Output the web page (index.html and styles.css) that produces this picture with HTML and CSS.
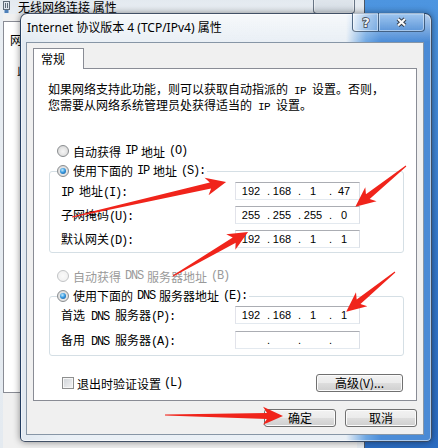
FILE: index.html
```html
<!DOCTYPE html>
<html lang="zh-CN">

<head>
    <meta charset="UTF-8">
    <meta name="viewport" content="width=device-width, initial-scale=1.0">
    <title>Internet 协议版本 4 (TCP/IPv4) 属性</title>
    <link rel="stylesheet" href="styles.css">
</head>

<body>
    <div class="desktop">
        <!-- parent window, mostly hidden behind the dialog -->
        <div class="window back">
            <div class="caption">
                <svg class="app-icon" width="7" height="12" viewBox="0 0 7 12">
                    <rect x="0.5" y="0.5" width="6" height="8" fill="#dfe6ee" stroke="#5f6b78"/>
                    <rect x="2" y="2" width="1" height="5" fill="#5f6b78"/>
                    <rect x="4" y="2" width="1" height="5" fill="#5f6b78"/>
                    <rect x="1.5" y="9" width="4" height="3" fill="#4d7fb8"/>
                </svg>
                <span class="caption-text">无线网络连接 属性</span>
                <div class="caption-buttons">
                    <span class="cap-btn close">
                        <svg width="12" height="10" viewBox="0 0 12 10">
                            <path d="M2.5 -1 L9.5 6.5 M9.5 -1 L2.5 6.5" stroke="#3a4350" stroke-width="4"/>
                            <path d="M2.5 -1 L9.5 6.5 M9.5 -1 L2.5 6.5" stroke="#fafafa" stroke-width="2"/>
                        </svg>
                    </span>
                </div>
            </div>
            <div class="back-client">
                <div class="back-panel">
                    <div>网络连接</div>
                    <div class="back-line">此连接使用下列项目</div>
                </div>
            </div>
        </div>

        <!-- TCP/IPv4 properties dialog -->
        <div class="window dialog">
            <div class="caption">
                <span class="caption-text">Internet 协议版本 4 (TCP/IPv4) 属性</span>
                <div class="caption-buttons">
                    <span class="cap-btn help">
                        <svg width="12" height="14" viewBox="0 0 12 14">
                            <text x="6" y="12" text-anchor="middle">?</text>
                        </svg>
                    </span>
                    <span class="cap-btn close">
                        <svg width="13" height="11" viewBox="0 0 13 11">
                            <path d="M3 2 L10 8.5 M10 2 L3 8.5" stroke="#343d4a" stroke-width="4.2"/>
                            <path d="M3 2 L10 8.5 M10 2 L3 8.5" stroke="#fafafa" stroke-width="2.2"/>
                        </svg>
                    </span>
                </div>
            </div>

            <div class="client">
                <div class="tabs">
                    <div class="tab">常规</div>
                </div>
                <div class="tab-panel">
                    <p class="intro">如果网络支持此功能，则可以获取自动指派的<span class="lat"> IP </span>设置。否则，<br>您需要从网络系统管理员处获得适当的<span class="lat"> IP </span>设置。</p>

                    <label class="option"><span class="radio"></span>自动获得<span class="lat"> IP </span>地址<span class="lat">(O)</span></label>
                    <fieldset class="group group-ip">
                        <legend><label class="option"><span class="radio checked"></span>使用下面的<span class="lat"> IP </span>地址<span class="lat">(S):</span></label></legend>
                        <div class="field-row">
                            <span><span class="lat">IP </span>地址<span class="lat">(I):</span></span>
                            <div class="ip"><span class="oct">192</span><span class="dot">.</span><span class="oct">168</span><span class="dot">.</span><span class="oct">1</span><span class="dot">.</span><span class="oct">47</span></div>
                        </div>
                        <div class="field-row">
                            <span>子网掩码<span class="lat">(U):</span></span>
                            <div class="ip"><span class="oct">255</span><span class="dot">.</span><span class="oct">255</span><span class="dot">.</span><span class="oct">255</span><span class="dot">.</span><span class="oct">0</span></div>
                        </div>
                        <div class="field-row">
                            <span>默认网关<span class="lat">(D):</span></span>
                            <div class="ip"><span class="oct">192</span><span class="dot">.</span><span class="oct">168</span><span class="dot">.</span><span class="oct">1</span><span class="dot">.</span><span class="oct">1</span></div>
                        </div>
                    </fieldset>

                    <label class="option option-dns disabled"><span class="radio"></span>自动获得<span class="lat"> DNS </span>服务器地址<span class="lat">(B)</span></label>
                    <fieldset class="group group-dns">
                        <legend><label class="option"><span class="radio checked"></span>使用下面的<span class="lat"> DNS </span>服务器地址<span class="lat">(E):</span></label></legend>
                        <div class="field-row">
                            <span>首选<span class="lat"> DNS </span>服务器<span class="lat">(P):</span></span>
                            <div class="ip"><span class="oct">192</span><span class="dot">.</span><span class="oct">168</span><span class="dot">.</span><span class="oct">1</span><span class="dot">.</span><span class="oct">1</span></div>
                        </div>
                        <div class="field-row">
                            <span>备用<span class="lat"> DNS </span>服务器<span class="lat">(A):</span></span>
                            <div class="ip"><span class="oct"></span><span class="dot">.</span><span class="oct"></span><span class="dot">.</span><span class="oct"></span><span class="dot">.</span><span class="oct"></span></div>
                        </div>
                    </fieldset>

                    <div class="check-row">
                        <label class="check"><span class="checkbox"></span>退出时验证设置<span class="lat">(L)</span></label>
                        <button class="btn btn-advanced">高级(V)...</button>
                    </div>
                </div>

                <div class="dialog-buttons">
                    <button class="btn">确定</button>
                    <button class="btn">取消</button>
                </div>
            </div>
        </div>

        <!-- red pointer arrows drawn on top -->
        <svg class="marks" width="438" height="448" viewBox="0 0 438 448">
            <g fill="#f0241b">
                <path transform="translate(72 217) rotate(-12.8)" d="M0 -0.5 L142 -3 L138 -9 L158 0 L138 9 L142 3 L0 0.5 Z"/>
                <path transform="translate(406 166) rotate(141.2)" d="M0 -0.5 L49 -3 L45 -9 L65 0 L45 9 L49 3 L0 0.5 Z"/>
                <path transform="translate(173 276) rotate(-30.4)" d="M0 -0.5 L71 -3 L67 -9 L87 0 L67 9 L71 3 L0 0.5 Z"/>
                <path transform="translate(395 272) rotate(140.8)" d="M0 -0.5 L47 -3 L43 -9 L63 0 L43 9 L47 3 L0 0.5 Z"/>
                <path transform="translate(165 415) rotate(0.5)" d="M0 -0.5 L102 -3 L98 -9 L118 0 L98 9 L102 3 L0 0.5 Z"/>
            </g>
        </svg>
    </div>
</body>

</html>
```

FILE: styles.css
```css
* {
    box-sizing: border-box;
}

html,
body {
    margin: 0;
}

body {
    width: 438px;
    height: 448px;
    overflow: hidden;
    font-family: "Noto Sans CJK SC", sans-serif;
    font-size: 12px;
    color: #000;
    background: linear-gradient(180deg, #4d95e0 0, #3478cc 60%, #2b6cc2 100%);
}

.desktop {
    position: relative;
    width: 438px;
    height: 448px;
}

/* latin runs inside chinese labels, half width like the system font */
.lat {
    font-family: "Liberation Mono", monospace;
    font-size: 12px;
    letter-spacing: -1.2px;
}

.window {
    position: absolute;
    display: flex;
    flex-direction: column;
}

.caption {
    display: flex;
    flex-shrink: 0;
}

.caption-buttons {
    display: flex;
    margin-left: auto;
}

.cap-btn {
    display: flex;
    align-items: center;
    justify-content: center;
    border: 1px solid rgba(28, 44, 66, 0.6);
    border-top: 0;
    box-shadow: inset 0 0 0 1px rgba(255, 255, 255, 0.45);
}

/* ---- parent window ---- */

.back {
    left: -5px;
    top: -10px;
    width: 370px;
    height: 470px;
    padding: 0 7px 7px 7px;
    border: 1px solid #4d5866;
    border-radius: 6px;
    background: linear-gradient(180deg, #dfe6ed 0, #e9eef3 22px, #e4eaf0 100%);
}

.back .caption {
    height: 23px;
    align-items: flex-end;
}

.back .app-icon {
    display: block;
    margin-bottom: 1px;
}

.back .caption-text {
    margin-left: 8px;
    line-height: 14px;
    font-size: 12px;
}

.back .caption-buttons {
    margin-right: 2px;
}

.back .cap-btn.close {
    width: 42px;
    height: 23px;
    border-radius: 0 0 4px 4px;
    align-items: flex-start;
    padding-top: 1px;
    background: linear-gradient(180deg, #e6ebf0 0, #d4dce4 100%);
}

.back-client {
    flex: 1;
    background: #f0f0f0;
    padding-top: 7px;
}

.back-panel {
    height: 372px;
    padding: 11px 6px;
    line-height: 14px;
    background: #fff;
    border: 1px solid #898c95;
}

.back-line {
    margin-top: 16px;
    padding-left: 7px;
}

/* ---- properties dialog ---- */

.dialog {
    left: 20px;
    top: 13px;
    width: 412px;
    height: 429px;
    padding: 0 7px 6px 5px;
    border: 1px solid rgba(22, 40, 66, 0.8);
    border-radius: 7px 7px 5px 5px;
    background:
        linear-gradient(180deg, rgba(255, 255, 255, 0.6) 0, rgba(255, 255, 255, 0) 28px),
        linear-gradient(90deg, #e1e9f1 0, #eaf0f6 40px, #e9eff5 325px, #6ea7e3 345px, #4c8dd8 360px, #4a8ad5 100%);
    box-shadow: inset 0 0 0 1px rgba(255, 255, 255, 0.55), 0 0 7px rgba(0, 0, 0, 0.45);
}

.dialog .caption {
    height: 28px;
    align-items: flex-start;
}

.dialog .caption-text {
    margin: 7px 0 0 1px;
    line-height: 14px;
    font-family: "Noto Sans", "Noto Sans CJK SC", sans-serif;
    font-size: 12px;
    color: #000;
}

.dialog .caption-buttons {
    margin-top: -1px;
    margin-right: -1px;
}

.dialog .cap-btn {
    height: 19px;
}

.cap-btn.help {
    width: 26px;
    border-right: 0;
    border-radius: 0 0 0 4px;
    background: linear-gradient(90deg, rgba(255, 255, 255, 0.35), rgba(120, 170, 225, 0.6));
}

.cap-btn.help text {
    font-family: "DejaVu Sans", sans-serif;
    font-size: 13px;
    font-weight: bold;
    fill: #eef1f4;
    stroke: #3a4350;
    stroke-width: 1.6px;
    paint-order: stroke;
}

.dialog .cap-btn.close {
    width: 47px;
    border-radius: 0 0 4px 0;
    background: linear-gradient(180deg, rgba(140, 190, 240, 0.55), rgba(70, 135, 210, 0.5));
}

.client {
    flex: 1;
    display: flex;
    flex-direction: column;
    padding: 5px 6px 0 6px;
    background: #f0f0f0;
    border: 1px solid #8796a6;
}

.tabs {
    display: flex;
}

.tab {
    position: relative;
    z-index: 1;
    width: 51px;
    height: 21px;
    margin-bottom: -1px;
    padding-left: 7px;
    line-height: 19px;
    background: #fff;
    border: 1px solid #898c95;
    border-bottom: 0;
}

.tab-panel {
    height: 333px;
    padding: 13px 12px 0 14px;
    background: #fff;
    border: 1px solid #898c95;
}

.intro {
    margin: 0;
    line-height: 13px;
    white-space: nowrap;
}

.intro .lat {
    font-size: 11px;
    letter-spacing: -0.6px;
}

.option {
    display: flex;
    align-items: center;
    gap: 4px;
    height: 20px;
    white-space: nowrap;
}

.tab-panel > .option {
    margin: 27px 0 0 9px;
}

.tab-panel > .option-dns {
    margin-top: 13px;
}

.option.disabled {
    color: #9a9a9a;
}

.radio {
    display: inline-flex;
    align-items: center;
    justify-content: center;
    flex-shrink: 0;
    width: 12px;
    height: 12px;
    border-radius: 50%;
    border: 1px solid #8a8d90;
    background: radial-gradient(circle at 50% 55%, #f6f6f6 0, #e2e2e2 55%, #cdcdcd 100%);
}

.radio.checked::after {
    content: "";
    width: 6px;
    height: 6px;
    border-radius: 50%;
    background: radial-gradient(circle at 40% 35%, #c5ecff 0, #3a9be0 45%, #0f4c8e 100%);
}

.option.disabled .radio {
    border-color: #c2c4c6;
    background: radial-gradient(circle, #fafafa 0, #eeeeee 100%);
}

.group {
    width: 355px;
    min-width: 0;
    margin: 0 0 0 1px;
    border: 1px solid #d5dfe5;
    border-radius: 3px;
}

.group legend {
    padding: 0 2px 0 0;
    line-height: 20px;
}

.group-ip {
    padding: 1px 0 4px 7px;
}

.group-dns {
    padding: 0 0 6px 7px;
}

.field-row {
    display: grid;
    grid-template-columns: 174px 125px;
    align-items: center;
    height: 18px;
    margin-left: 4px;
    white-space: nowrap;
}

.group-ip .field-row + .field-row {
    margin-top: 6px;
}

.group-dns .field-row + .field-row {
    margin-top: 7px;
}

.ip {
    display: flex;
    align-items: center;
    height: 18px;
    padding-left: 3px;
    font-family: "Liberation Sans", sans-serif;
    font-size: 11px;
    background: #fff;
    border: 1px solid;
    border-color: #abadb3 #dbdfe6 #e3e9ef #e2e3ea;
}

.ip .oct {
    width: 24px;
    text-align: center;
}

.ip .dot {
    width: 7px;
    text-align: right;
}

.check-row {
    display: flex;
    align-items: center;
    justify-content: space-between;
    height: 18px;
    margin-top: 18px;
}

.check {
    display: flex;
    align-items: center;
    gap: 3px;
    padding-left: 14px;
}

.checkbox {
    width: 12px;
    height: 12px;
    border: 1px solid #8e8f8f;
    background: linear-gradient(135deg, #cfd3d8 0, #f4f4f4 100%);
    box-shadow: inset 0 0 0 1px #f6f6f6;
}

.btn {
    width: 72px;
    height: 18px;
    padding: 0;
    font-family: "Noto Sans CJK SC", sans-serif;
    font-size: 12px;
    line-height: 16px;
    color: #000;
    border: 1px solid #707070;
    border-radius: 3px;
    background: linear-gradient(180deg, #f2f2f2 0, #ebebeb 48%, #dddddd 52%, #cfcfcf 100%);
    box-shadow: inset 0 0 0 1px #fbfbfb;
}

.btn-advanced {
    width: 87px;
    margin-right: 1px;
}

.dialog-buttons {
    display: flex;
    justify-content: flex-end;
    gap: 9px;
    margin-top: 8px;
}

.marks {
    position: absolute;
    left: 0;
    top: 0;
    pointer-events: none;
}
```
